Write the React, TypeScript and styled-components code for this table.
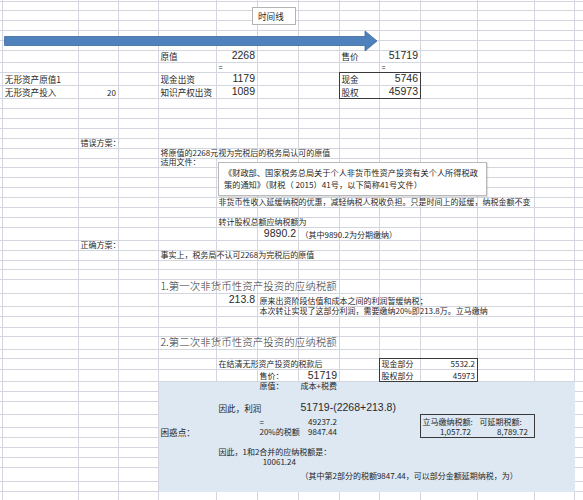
import React from "react";
import styled, { createGlobalStyle, css } from "styled-components";

const GlobalStyle = createGlobalStyle`
  html, body { margin: 0; padding: 0; background: #ffffff; overflow: hidden; }
  #root { width: 583px; height: 500px; }
`;

const GRID = "#d3d6df";
const FILL = "#dde8f3";
const INK = "#1f1f1f";

const COLS = [3.3, 75.7, 40, 40, 58, 41, 41, 41, 40, 41, 57, 57, 40, 8.7];
const ROWS = [
  1.5, 9.2, 10, 10, 10, 10, 12, 10, 13.3, 13,
  10, 10, 10, 10, 10, 10,
  9.5, 9.8, 9.4, 10, 10, 10, 10, 13.3,
  10, 10, 9.3, 10, 13.4, 13.3, 10, 10.7,
  9.3, 13, 9.3, 10.7, 12.3, 10, 10, 12.7, 13.3,
  10, 10, 10, 10, 13.4, 10, 10,
];

type Variant = "cn" | "label" | "num" | "head" | "tiny";
type Align = "l" | "r" | "acct";
type Entry = { r: number; c: number; t: string; v: Variant; a?: Align };

const CONTENT: Entry[] = [
  { r: 6, c: 4, t: "原值", v: "label" },
  { r: 6, c: 5, t: "2268", v: "num", a: "r" },
  { r: 6, c: 8, t: "售价", v: "label" },
  { r: 6, c: 9, t: "51719", v: "num", a: "r" },
  { r: 7, c: 5, t: "=", v: "tiny" },
  { r: 7, c: 9, t: "=", v: "tiny" },
  { r: 8, c: 1, t: "无形资产原值1", v: "label" },
  { r: 8, c: 4, t: "现金出资", v: "label" },
  { r: 8, c: 5, t: "1179", v: "num", a: "r" },
  { r: 8, c: 8, t: "现金", v: "label" },
  { r: 8, c: 9, t: "5746", v: "num", a: "r" },
  { r: 9, c: 1, t: "无形资产投入", v: "label" },
  { r: 9, c: 2, t: "20", v: "cn", a: "r" },
  { r: 9, c: 4, t: "知识产权出资", v: "label" },
  { r: 9, c: 5, t: "1089", v: "num", a: "r" },
  { r: 9, c: 8, t: "股权", v: "label" },
  { r: 9, c: 9, t: "45973", v: "num", a: "r" },
  { r: 14, c: 2, t: "错误方案：", v: "cn" },
  { r: 15, c: 4, t: "将原值的2268元视为完税后的税务局认可的原值", v: "cn" },
  { r: 16, c: 4, t: "适用文件：", v: "cn" },
  { r: 20, c: 5, t: "非货币性收入延缓纳税的优惠，减轻纳税人税收负担。只是时间上的延缓，纳税金额不变", v: "cn" },
  { r: 22, c: 5, t: "转计股权总额应纳税额为", v: "cn" },
  { r: 23, c: 6, t: "9890.2", v: "num", a: "r" },
  { r: 23, c: 7, t: "（其中9890.2为分期缴纳）", v: "cn" },
  { r: 24, c: 2, t: "正确方案：", v: "cn" },
  { r: 25, c: 4, t: "事实上，税务局不认可2268为完税后的原值", v: "cn" },
  { r: 28, c: 4, t: "1.第一次非货币性资产投资的应纳税额", v: "head" },
  { r: 29, c: 5, t: "213.8", v: "num", a: "r" },
  { r: 29, c: 6, t: "原来出资阶段估值和成本之间的利润暂缓纳税；", v: "cn" },
  { r: 30, c: 6, t: "本次转让实现了这部分利润，需要缴纳20%即213.8万。立马缴纳", v: "cn" },
  { r: 33, c: 4, t: "2.第二次非货币性资产投资的应纳税额", v: "head" },
  { r: 35, c: 5, t: "在结清无形资产投资的税款后", v: "cn" },
  { r: 35, c: 9, t: "现金部分", v: "cn" },
  { r: 35, c: 10, t: "5532.2", v: "cn", a: "r" },
  { r: 36, c: 6, t: "售价：", v: "cn" },
  { r: 36, c: 7, t: "51719", v: "num", a: "r" },
  { r: 36, c: 9, t: "股权部分", v: "cn" },
  { r: 36, c: 10, t: "45973", v: "cn", a: "r" },
  { r: 37, c: 6, t: "原值：", v: "cn" },
  { r: 37, c: 7, t: "成本+税费", v: "cn" },
  { r: 39, c: 5, t: "因此，利润", v: "label" },
  { r: 39, c: 7, t: "51719-(2268+213.8)", v: "num" },
  { r: 40, c: 6, t: "=", v: "cn" },
  { r: 40, c: 7, t: "49237.2", v: "cn", a: "r" },
  { r: 40, c: 10, t: "立马缴纳税额:", v: "cn" },
  { r: 40, c: 11, t: "可延期税额:", v: "cn" },
  { r: 41, c: 4, t: "困惑点：", v: "label" },
  { r: 41, c: 6, t: "20%的税额", v: "cn" },
  { r: 41, c: 7, t: "9847.44", v: "cn", a: "r" },
  { r: 41, c: 10, t: "1,057.72", v: "cn", a: "acct" },
  { r: 41, c: 11, t: "8,789.72", v: "cn", a: "acct" },
  { r: 43, c: 5, t: "因此，1和2合并的应纳税额是：", v: "cn" },
  { r: 44, c: 6, t: "10061.24", v: "cn", a: "r" },
  { r: 45, c: 7, t: "（其中第2部分的税额9847.44，可以部分金额延期纳税，为）", v: "cn" },
];

const BOXES = [
  { r0: 8, r1: 9, c0: 8, c1: 9 },
  { r0: 35, r1: 36, c0: 9, c1: 10 },
  { r0: 40, r1: 41, c0: 10, c1: 11 },
];

const FILLED = { r0: 37, r1: 46, c0: 4, c1: 12 };

const Sheet = styled.div`
  position: relative;
  width: 583px;
  height: 500px;
  overflow: hidden;
  background: #ffffff;
  color: ${INK};
  font-family: "Noto Sans CJK SC", "Liberation Sans", sans-serif;
`;

const Row = styled.div<{ $h: number }>`
  display: flex;
  height: ${(p) => p.$h}px;
`;

const Cell = styled.div<{
  $w: number;
  $fill: boolean;
  $align: Align;
  $bt: boolean;
  $bb: boolean;
  $bl: boolean;
  $br: boolean;
}>`
  position: relative;
  box-sizing: border-box;
  flex: 0 0 ${(p) => p.$w}px;
  min-width: 0;
  height: 100%;
  display: flex;
  align-items: flex-end;
  justify-content: ${(p) => (p.$align === "l" ? "flex-start" : "flex-end")};
  padding: 0 ${(p) => (p.$align === "acct" ? 6 : p.$align === "r" ? 2 : 0)}px 0
    ${(p) => (p.$align === "l" ? 1.5 : 0)}px;
  white-space: nowrap;
  overflow: visible;
  border-right: 1px solid ${(p) => (p.$fill ? FILL : GRID)};
  border-bottom: 1px solid ${(p) => (p.$fill ? FILL : GRID)};
  background: ${(p) => (p.$fill ? FILL : "transparent")};
  ${(p) =>
    (p.$bt || p.$bb || p.$bl || p.$br) &&
    css`
      &::after {
        content: "";
        position: absolute;
        inset: -1px;
        pointer-events: none;
        border-style: solid;
        border-color: #3a3a3a;
        border-width: ${p.$bt ? 1 : 0}px ${p.$br ? 1 : 0}px ${p.$bb ? 1 : 0}px
          ${p.$bl ? 1 : 0}px;
      }
    `}
`;

const variantStyles: Record<Variant, ReturnType<typeof css>> = {
  cn: css`
    font-family: "Noto Sans CJK SC", sans-serif;
    font-size: 8px;
    padding-bottom: 1px;
  `,
  label: css`
    font-family: "Noto Sans CJK SC", sans-serif;
    font-size: 8.6px;
    padding-bottom: 1px;
  `,
  tiny: css`
    font-family: "Liberation Sans", sans-serif;
    font-size: 7px;
    padding-bottom: 1px;
  `,
  num: css`
    font-family: "Liberation Sans", Arial, sans-serif;
    font-size: 10.5px;
    color: #2a2a2a;
    padding-bottom: 1px;
  `,
  head: css`
    font-family: "Noto Sans CJK SC", sans-serif;
    font-size: 10.5px;
    font-weight: 300;
    color: #333333;
    padding-bottom: 1px;
  `,
};

const Text = styled.span<{ $v: Variant }>`
  position: relative;
  z-index: 1;
  line-height: 1;
  ${(p) => variantStyles[p.$v]}
`;

const TimelineBox = styled.div`
  position: absolute;
  z-index: 2;
  left: 252px;
  top: 7px;
  width: 44px;
  height: 18px;
  box-sizing: border-box;
  background: #ffffff;
  border: 1px solid #b4b4b4;
  font-family: "Noto Sans CJK SC", sans-serif;
  font-size: 8.6px;
  line-height: 1;
  padding: 4px 0 0 5px;
`;

const DocBox = styled.div`
  position: absolute;
  z-index: 2;
  left: 218px;
  top: 162px;
  width: 269px;
  height: 34px;
  box-sizing: border-box;
  background: #ffffff;
  border: 1px solid #b9b9b9;
  box-shadow: 1px 1px 1px rgba(0, 0, 0, 0.12);
  padding: 3px 0 0 5px;
  font-family: "Noto Sans CJK SC", sans-serif;
  font-size: 8.2px;
  line-height: 12px;
  white-space: nowrap;
`;

const ArrowSvg = styled.svg`
  position: absolute;
  z-index: 2;
  left: 4px;
  top: 30px;
  overflow: visible;
`;

function inBox(r: number, c: number) {
  let bt = false, bb = false, bl = false, br = false;
  for (const b of BOXES) {
    if (r >= b.r0 && r <= b.r1 && c >= b.c0 && c <= b.c1) {
      if (r === b.r0) bt = true;
      if (r === b.r1) bb = true;
      if (c === b.c0) bl = true;
      if (c === b.c1) br = true;
    }
  }
  return { bt, bb, bl, br };
}

export default function App() {
  const lookup = new Map<string, Entry>();
  CONTENT.forEach((e) => lookup.set(`${e.r},${e.c}`, e));

  return (
    <>
      <GlobalStyle />
      <Sheet>
        {ROWS.map((h, r) => (
          <Row key={r} $h={h}>
            {COLS.map((w, c) => {
              const e = lookup.get(`${r},${c}`);
              const fill =
                r >= FILLED.r0 && r <= FILLED.r1 && c >= FILLED.c0 && c <= FILLED.c1;
              const b = inBox(r, c);
              return (
                <Cell
                  key={c}
                  $w={w}
                  $fill={fill}
                  $align={e?.a ?? "l"}
                  $bt={b.bt}
                  $bb={b.bb}
                  $bl={b.bl}
                  $br={b.br}
                >
                  {e && <Text $v={e.v}>{e.t}</Text>}
                </Cell>
              );
            })}
          </Row>
        ))}

        <TimelineBox>时间线</TimelineBox>

        <ArrowSvg width="374" height="22" viewBox="0 0 374 22">
          <path
            d="M0.5 6.5 H361 V1 L373 11 L361 21 V15.5 H0.5 Z"
            fill="#4f81bd"
            stroke="#3c6a9e"
            strokeWidth="0.8"
          />
        </ArrowSvg>

        <DocBox>
          《财政部、国家税务总局关于个人非货币性资产投资有关个人所得税政
          <br />
          策的通知》（财税（ 2015）41号，以下简称41号文件）
        </DocBox>
      </Sheet>
    </>
  );
}
